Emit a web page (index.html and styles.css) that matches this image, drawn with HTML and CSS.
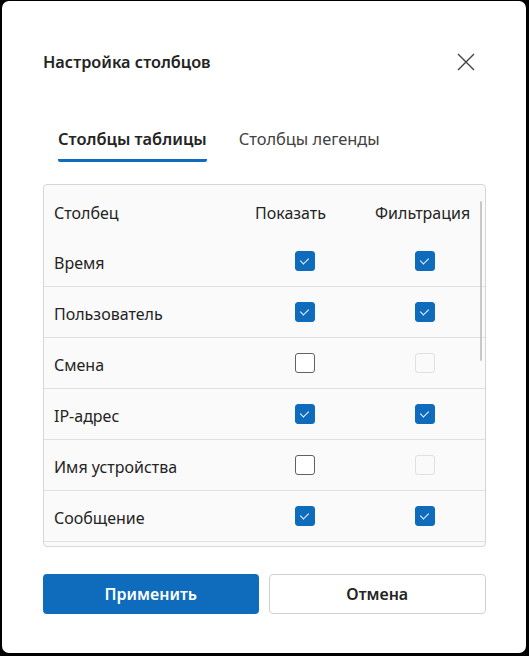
FILE: index.html
```html
<html>
	<head>
		<meta charset="utf-8">
		<title>Настройка столбцов</title>
		<link rel="stylesheet" href="styles.css">
	</head>
	<body>
		<div class="dialog">
			<div class="dialog-header">
				<span class="dialog-title">Настройка столбцов</span>
				<button class="close-button" aria-label="Закрыть">
					<svg width="18" height="18" viewBox="0 0 18 18"><path d="M1 1 L17 17 M17 1 L1 17" stroke="#424242" stroke-width="1.4" fill="none"/></svg>
				</button>
			</div>
			<div class="tabs">
				<div class="tab tab-active">Столбцы таблицы</div>
				<div class="tab">Столбцы легенды</div>
			</div>
			<div class="columns-box">
				<div class="scroll-thumb"></div>
				<div class="col-row col-head">
					<span>Столбец</span>
					<span>Показать</span>
					<span>Фильтрация</span>
				</div>
				<div class="col-row">
					<span>Время</span>
					<span><i class="check on"></i></span>
					<span><i class="check on"></i></span>
				</div>
				<div class="col-row">
					<span>Пользователь</span>
					<span><i class="check on"></i></span>
					<span><i class="check on"></i></span>
				</div>
				<div class="col-row">
					<span>Смена</span>
					<span><i class="check"></i></span>
					<span><i class="check off"></i></span>
				</div>
				<div class="col-row">
					<span>IP-адрес</span>
					<span><i class="check on"></i></span>
					<span><i class="check on"></i></span>
				</div>
				<div class="col-row">
					<span>Имя устройства</span>
					<span><i class="check"></i></span>
					<span><i class="check off"></i></span>
				</div>
				<div class="col-row">
					<span>Сообщение</span>
					<span><i class="check on"></i></span>
					<span><i class="check on"></i></span>
				</div>
			</div>
			<div class="dialog-actions">
				<button class="btn btn-primary">Применить</button>
				<button class="btn btn-secondary">Отмена</button>
			</div>
		</div>
	</body>
</html>
```

FILE: styles.css
```css
body {
	margin: 0;
	background-color: #000;
	font-family: "Noto Sans", "Open Sans", sans-serif;
	color: #242424;
}

.dialog {
	box-sizing: border-box;
	width: 524px;
	height: 652px;
	margin: 1px 0 0 2px;
	background-color: #fff;
	border-radius: 7px;
	padding: 0 40px 0 41px;
	display: flex;
	flex-direction: column;
}

.dialog-header {
	display: flex;
	justify-content: space-between;
	align-items: center;
	height: 40px;
	margin-top: 41px;
}

.dialog-title {
	font-size: 16.3px;
	font-weight: 600;
}

.close-button {
	background: none;
	border: none;
	padding: 0;
	width: 18px;
	height: 18px;
	margin-right: 11px;
	display: flex;
}

.tabs {
	display: flex;
	gap: 32px;
	margin-top: 43px;
	padding-left: 15px;
}

.tab {
	font-size: 16.4px;
	padding: 1px 0 8px;
	border-bottom: 3px solid transparent;
	color: #424242;
	line-height: 25px;
}

.tab-active {
	font-weight: 600;
	color: #242424;
	border-bottom-color: #0f6cbd;
	border-radius: 0 0 2px 2px;
}

.columns-box {
	position: relative;
	margin-top: 22px;
	height: 363px;
	box-sizing: border-box;
	border: 1px solid #d6d6d6;
	border-radius: 4px;
	background-color: #fafafa;
	overflow: hidden;
}

.scroll-thumb {
	position: absolute;
	right: 3px;
	top: 16px;
	width: 2px;
	height: 160px;
	background-color: #c8c8c8;
	border-radius: 1px;
}

.col-row {
	display: grid;
	grid-template-columns: 201px 120px 1fr;
	align-items: center;
	height: 50px;
	padding-left: 10px;
	border-bottom: 1px solid #e0e0e0;
	font-size: 16px;
}

.col-row > span:first-child,
.col-head > span {
	padding-top: 4px;
}

.col-head {
	height: 51px;
	border-bottom: none;
}

.check {
	display: block;
	box-sizing: border-box;
	width: 20px;
	height: 20px;
	margin-left: 40px;
	border: 1px solid #616161;
	border-radius: 3px;
	background-color: #fff;
}

.check.on {
	border-color: #0f6cbd;
	background-color: #0f6cbd;
	position: relative;
}

.check.on::after {
	content: "";
	position: absolute;
	left: 6px;
	top: 4px;
	width: 4px;
	height: 7px;
	border: solid #fff;
	border-width: 0 1.6px 1.6px 0;
	transform: rotate(45deg);
}

.check.off {
	border-color: #e0e0e0;
	background-color: #fafafa;
}

.dialog-actions {
	display: flex;
	gap: 10px;
	margin-top: 27px;
}

.btn {
	flex: 1;
	height: 40px;
	border-radius: 4px;
	font-family: "Noto Sans", "Open Sans", sans-serif;
	font-size: 16px;
	font-weight: 600;
}

.btn-primary {
	background-color: #0f6cbd;
	border: none;
	color: #fff;
}

.btn-secondary {
	background-color: #fff;
	border: 1px solid #d1d1d1;
	color: #242424;
}
```
